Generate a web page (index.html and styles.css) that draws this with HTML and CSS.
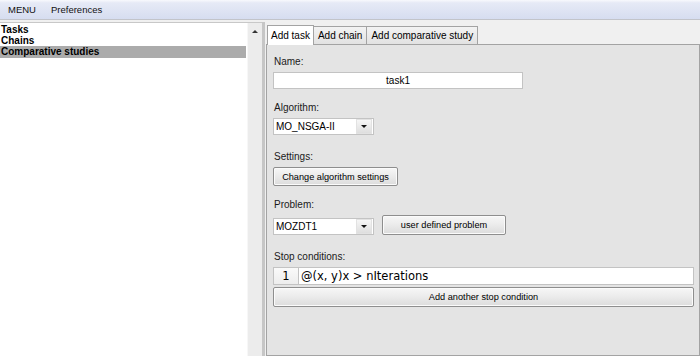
FILE: index.html
```html
<!DOCTYPE html>
<html lang="en">
<head>
    <meta charset="UTF-8">
    <title>Task manager</title>
    <link rel="stylesheet" href="styles.css">
</head>
<body>
    <div class="menubar">
        <span class="menu-item">MENU</span>
        <span class="menu-item">Preferences</span>
    </div>

    <div class="main">
        <div class="left-pane">
            <div class="tree">
                <div class="tree-item">Tasks</div>
                <div class="tree-item">Chains</div>
                <div class="tree-item selected">Comparative studies</div>
            </div>
            <div class="scrollbar">
                <span class="arrow-up"></span>
            </div>
        </div>

        <div class="divider"></div>

        <div class="right-pane">
            <div class="tabs">
                <div class="tab active">Add task</div>
                <div class="tab">Add chain</div>
                <div class="tab">Add comparative study</div>
            </div>

            <div class="tab-content">
                <div class="field">
                    <div class="label">Name:</div>
                    <input class="text-input name-input" type="text" value="task1">
                </div>

                <div class="field field-combo">
                    <div class="label">Algorithm:</div>
                    <div class="combo">
                        <span class="combo-value">MO_NSGA-II</span>
                        <span class="combo-arrow"></span>
                    </div>
                </div>

                <div class="field">
                    <div class="label">Settings:</div>
                    <button class="btn settings-btn">Change algorithm settings</button>
                </div>

                <div class="field field-combo">
                    <div class="label">Problem:</div>
                    <div class="row">
                        <div class="combo">
                            <span class="combo-value">MOZDT1</span>
                            <span class="combo-arrow"></span>
                        </div>
                        <button class="btn problem-btn">user defined problem</button>
                    </div>
                </div>

                <div class="field">
                    <div class="label">Stop conditions:</div>
                    <div class="stop-row">
                        <span class="stop-index">1</span>
                        <span class="stop-text">@(x, y)x &gt; nIterations</span>
                    </div>
                    <button class="btn wide-btn">Add another stop condition</button>
                </div>
            </div>
        </div>
    </div>
</body>
</html>
```

FILE: styles.css
```css
html, body {
    height: 100%;
    margin: 0;
    padding: 0;
    overflow: hidden;
}

body {
    font-family: "Liberation Sans", Arial, sans-serif;
    font-size: 10px;
    color: #000;
    background-color: #f0f0f0;
    display: flex;
    flex-direction: column;
}

.menubar {
    height: 19px;
    background: linear-gradient(to bottom, #f8f9fd 0%, #e6eaf6 15%, #d6ddf0 100%);
    border-bottom: 1px solid #c2c4ca;
    display: flex;
    align-items: center;
    padding-left: 8px;
    gap: 15px;
    font-size: 9.5px;
    color: #111;
}

.main {
    flex: 1;
    display: flex;
    margin-top: 2px;
    min-height: 0;
}

.left-pane {
    width: 262px;
    display: flex;
    background-color: #fff;
    border-top: 1px solid #c8c8c8;
}

.tree {
    flex: 1;
    padding-top: 1px;
    font-weight: bold;
    font-size: 10px;
}

.tree-item {
    height: 11px;
    line-height: 11px;
    padding-left: 1px;
}

.tree-item.selected {
    background-color: #ababab;
    height: 12px;
    line-height: 12px;
    margin-right: 1px;
}

.scrollbar {
    width: 14px;
    background-color: #ececec;
    border-left: 1px solid #f7f7f7;
    display: flex;
    justify-content: center;
    padding-top: 7px;
}

.arrow-up {
    width: 0;
    height: 0;
    border-left: 3px solid transparent;
    border-right: 3px solid transparent;
    border-bottom: 3px solid #333;
}

.divider {
    width: 3px;
    background-color: #c6c6c6;
}

.right-pane {
    flex: 1;
    display: flex;
    flex-direction: column;
    background-color: #f0f0f0;
    padding-left: 1px;
}

.tabs {
    display: flex;
    padding-left: 1px;
    height: 22px;
    align-items: flex-end;
    font-size: 10px;
}

.tab {
    height: 17px;
    line-height: 17px;
    padding: 0 4px;
    background: linear-gradient(to bottom, #f3f3f3, #e2e2e2);
    border: 1px solid #a3a3a3;
    border-bottom: none;
    margin-right: -1px;
}

.tab.active {
    height: 19px;
    line-height: 19px;
    background: #fff;
    position: relative;
    z-index: 1;
    margin-bottom: -1px;
    padding: 0 3px;
}

.tab-content {
    flex: 1;
    background-color: #e4e4e4;
    border: 1px solid #a3a3a3;
    padding: 11px 5px 0 6px;
}

.field {
    margin-bottom: 13px;
}

.field-combo {
    margin-bottom: 16px;
}

.label {
    color: #1a1a1a;
    height: 12px;
    line-height: 12px;
    margin-bottom: 4px;
    padding-left: 1px;
}

.text-input {
    box-sizing: border-box;
    height: 17px;
    border: 1px solid #c3c3c3;
    background: #fff;
    font-family: "Liberation Sans", Arial, sans-serif;
    font-size: 10px;
    padding: 0;
    display: block;
}

.name-input {
    width: 250px;
    text-align: center;
}

.combo {
    box-sizing: border-box;
    width: 101px;
    height: 17px;
    border: 1px solid #c3c3c3;
    background: #fff;
    display: flex;
    align-items: center;
    padding-right: 1px;
}

.combo-value {
    flex: 1;
    padding-left: 2px;
}

.combo-arrow {
    width: 14px;
    height: 13px;
    background: linear-gradient(to bottom, #f6f6f6, #dedede);
    border: 1px solid #e2e2e2;
    display: flex;
    align-items: center;
    justify-content: center;
}

.combo-arrow::after {
    content: "";
    border-left: 3px solid transparent;
    border-right: 3px solid transparent;
    border-top: 3px solid #111;
}

.btn {
    box-sizing: border-box;
    height: 20px;
    padding: 0;
    font-family: "Liberation Sans", Arial, sans-serif;
    font-size: 9.2px;
    color: #000;
    white-space: nowrap;
    background: linear-gradient(to bottom, #f7f7f7 0%, #ececec 45%, #dcdcdc 100%);
    border: 1px solid #8e8e8e;
    border-radius: 2px;
    box-shadow: inset 0 0 0 1px #fbfbfb;
    display: block;
}

.settings-btn {
    width: 125px;
    height: 19px;
}

.row {
    display: flex;
    align-items: flex-end;
    gap: 8px;
}

.problem-btn {
    width: 124px;
}

.stop-row {
    display: flex;
    height: 18px;
    box-sizing: border-box;
    border: 1px solid #c3c3c3;
    background: #fff;
    margin-bottom: 2px;
}

.stop-index {
    width: 24px;
    text-align: center;
    line-height: 16px;
    font-family: "DejaVu Sans", sans-serif;
    font-size: 11.5px;
    background: linear-gradient(to bottom, #fafafa, #ededed);
    border-right: 1px solid #c3c3c3;
}

.stop-text {
    padding-left: 2px;
    line-height: 16px;
    font-family: "DejaVu Sans", sans-serif;
    font-size: 11.5px;
}

.wide-btn {
    width: 100%;
}
```
